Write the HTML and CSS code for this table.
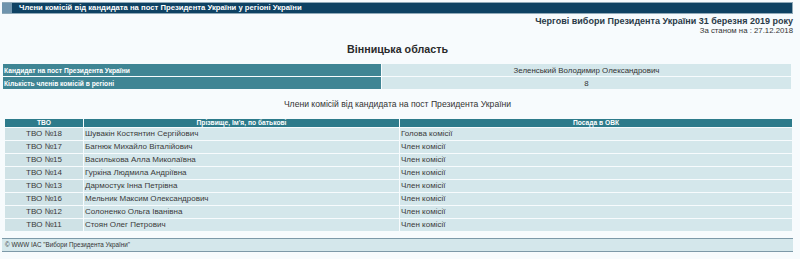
FILE: index.html
```html
<!DOCTYPE html>
<html lang="uk">
<head>
<meta charset="utf-8">
<title>Члени комісій</title>
<link rel="stylesheet" href="styles.css">
</head>
<body>
<div class="page">
  <div class="topbar"><span class="sq"></span><span class="title">Члени комісій від кандидата на пост Президента України у регіоні України</span></div>
  <div class="meta">
    <div class="elect">Чергові вибори Президента України 31 березня 2019 року</div>
    <div class="date">За станом на : 27.12.2018</div>
  </div>
  <h1 class="region">Вінницька область</h1>
  <table class="info">
    <tr><th>Кандидат на пост Президента України</th><td>Зеленський Володимир Олександрович</td></tr>
    <tr><th>Кількість членів комісій в регіоні</th><td>8</td></tr>
  </table>
  <h2 class="sub">Члени комісій від кандидата на пост Президента України</h2>
  <table class="list">
    <tr><th class="c1">ТВО</th><th class="c2">Прізвище, Ім'я, по батькові</th><th class="c3">Посада в ОВК</th></tr>
    <tr><td class="c1">ТВО №18</td><td>Шувакін Костянтин Сергійович</td><td>Голова комісії</td></tr>
    <tr><td class="c1">ТВО №17</td><td>Багнюк Михайло Віталійович</td><td>Член комісії</td></tr>
    <tr><td class="c1">ТВО №15</td><td>Василькова Алла Миколаївна</td><td>Член комісії</td></tr>
    <tr><td class="c1">ТВО №14</td><td>Гуркіна Людмила Андріївна</td><td>Член комісії</td></tr>
    <tr><td class="c1">ТВО №13</td><td>Дармостук Інна Петрівна</td><td>Член комісії</td></tr>
    <tr><td class="c1">ТВО №16</td><td>Мельник Максим Олександрович</td><td>Член комісії</td></tr>
    <tr><td class="c1">ТВО №12</td><td>Солоненко Ольга Іванівна</td><td>Член комісії</td></tr>
    <tr><td class="c1">ТВО №11</td><td>Стоян Олег Петрович</td><td>Член комісії</td></tr>
  </table>
  <div class="footer">© WWW IAC "Вибори Президента України"</div>
</div>
</body>
</html>
```
FILE: styles.css
```css
html, body { margin: 0; padding: 0; background: #f7fbfd; }
body { font-family: "Liberation Sans", Arial, sans-serif; color: #333; }
.page { padding: 2px 7px 0 2px; }
.topbar {
  display: flex; align-items: center; height: 10px;
  background: #0e4263; border: 1px solid #8fa9b8; border-left: none;
}
.sq { width: 10px; height: 10px; background: #6f94ad; margin-right: 7px; }
.title { color: #fff; font-weight: bold; font-size: 7.7px; line-height: 10px; }
.meta { text-align: right; font-size: 9px; line-height: 10px; padding-top: 2px; }
.elect { font-weight: bold; color: #2a3a48; }
.date { color: #333; font-size: 7.8px; }
.region { margin: 6px 0 0; font-size: 10.7px; line-height: 14px; text-align: center; color: #2a2a2a; font-weight: bold; }
.info { width: calc(100% - 1px); margin: 7px 0 0 0; border-collapse: separate; border-spacing: 1px; font-size: 6.7px; }
.info th { width: 376px; background: #3f8594; color: #fff; text-align: left; font-weight: bold; height: 12px; padding: 0 1px; line-height: 11px; }
.info td { background: #d4e7eb; text-align: center; height: 12px; line-height: 11px; font-size: 7.9px; padding: 0; }
.sub { margin: 8px 0 0; font-size: 8.6px; line-height: 13px; font-weight: normal; text-align: center; color: #333; }
.list { width: calc(100% - 2px); margin: 7px 0 0 2px; border-collapse: separate; border-spacing: 1px; font-size: 8px; }
.list th { background: #2d7b8b; color: #fff; font-size: 6.7px; font-weight: bold; height: 8px; line-height: 8px; padding: 0; }
.list td { background: #d4e7eb; height: 12px; line-height: 12px; padding: 0 0 0 1px; color: #3a3a3a; }
.list .c1 { width: 78px; text-align: center; padding: 0; }
.list td.c1 { font-size: 8px; background: #cfe2e6; }
.list .c2 { width: 315px; }
.footer {
  margin: 6px 0 0 0; height: 12px; line-height: 12px; font-size: 6.3px; padding-left: 3px;
  background: #d4e7eb; border-top: 1px solid #7d99a8; border-bottom: 1px solid #7d99a8; color: #333;
}
```
